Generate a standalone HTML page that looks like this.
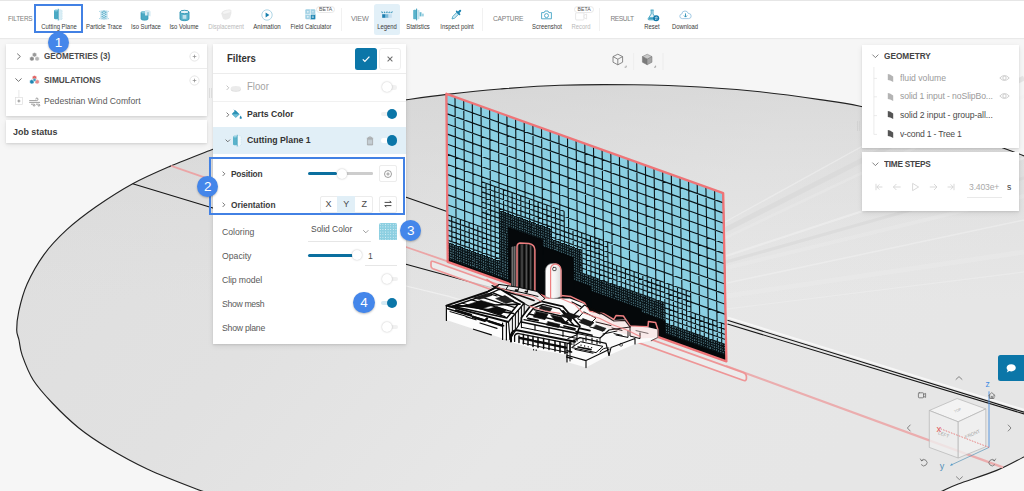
<!DOCTYPE html>
<html lang="en">
<head>
<meta charset="utf-8">
<title>Cutting Plane - Post-processing</title>
<style>
*{box-sizing:border-box;margin:0;padding:0}
html,body{width:1024px;height:491px;overflow:hidden;background:#f6f6f6;font-family:"Liberation Sans",sans-serif;color:#444}
#app{position:relative;width:1024px;height:491px;overflow:hidden}
#scene{position:absolute;left:0;top:0;width:1024px;height:491px}
.abs{position:absolute}
/* toolbar */
#tb{position:absolute;left:0;top:0;width:1024px;height:37.6px;background:#fff;border-top:1px solid #e6e6e6;box-shadow:0 1px 1px rgba(0,0,0,.05)}
.sec{position:absolute;top:13.5px;font-size:6.4px;letter-spacing:-.2px;color:#7d7d7d;line-height:8px;white-space:nowrap}
.lbl{position:absolute;top:21.9px;width:60px;margin-left:-30px;text-align:center;font-size:6.6px;line-height:8px;color:#3a3a3a;white-space:nowrap;transform:scaleX(.894)}
.lbl.dis{color:#b9b9b9}
.tsep{position:absolute;top:7px;width:1px;height:23px;background:#f1f1f1}
.ico{position:absolute;margin-top:-.7px}
.beta{position:absolute;height:7px;border:1px solid #e9e9e9;border-radius:4px;background:#fff;font-size:5.2px;line-height:5.6px;text-align:center;color:#555;letter-spacing:0}
/* panels */
.panel{position:absolute;background:#fff;box-shadow:0 1px 2px rgba(0,0,0,.1),0 2px 6px rgba(0,0,0,.08)}
.t{position:absolute;white-space:nowrap;line-height:12px;transform:scaleX(.93);transform-origin:0 50%}
.t.c{transform:none}
.b{font-weight:bold}
.badge{position:absolute;width:21.4px;height:21.4px;border-radius:50%;background:#4486ea;color:#fff;font-size:13.5px;line-height:21.4px;text-align:center;box-shadow:0 1px 2px rgba(0,0,0,.25)}
.knob{position:absolute;width:10px;height:10px;border-radius:50%;background:#fff;box-shadow:0 0 2px rgba(0,0,0,.28)}
.knob.on{background:#0b76a8;box-shadow:none;width:10.6px;height:10.6px}
.track{position:absolute;height:4.4px;border-radius:2.2px;background:#f1f1f1}
.track.on{background:#d5e9f3}
.sbtn{position:absolute;width:18.2px;height:17.6px;border:1px solid #ececec;border-radius:2px;background:#fff}
</style>
</head>
<body>
<div id="app">
<svg id="scene" width="1024" height="491" viewBox="0 0 1024 491">
<defs>
<linearGradient id="gd" x1="0" y1="0" x2="1" y2="0.35">
<stop offset="0" stop-color="#dedede"/><stop offset="0.4" stop-color="#e1e1e1"/><stop offset="0.7" stop-color="#e7e7e7"/><stop offset="1" stop-color="#e6e6e6"/>
</linearGradient>
<linearGradient id="gv" gradientUnits="userSpaceOnUse" x1="0" y1="84" x2="0" y2="300">
<stop offset="0" stop-color="#cfcfcf" stop-opacity=".55"/><stop offset="0.45" stop-color="#d4d4d4" stop-opacity=".3"/><stop offset="1" stop-color="#d8d8d8" stop-opacity="0"/>
</linearGradient>
</defs>
<rect width="1024" height="491" fill="#f6f6f6"/>
<path d="M212.9 149.2C220.8 146.2 245.5 136.4 260.0 131.5C274.5 126.5 285.0 123.3 300.0 119.5C315.0 115.7 332.7 111.7 350.0 108.5C367.3 105.3 387.8 102.5 404.0 100.2C420.2 97.9 431.0 96.3 447.0 94.4C463.0 92.5 481.2 90.5 500.0 89.0C518.8 87.5 537.7 85.9 560.0 85.2C582.3 84.5 610.7 84.5 634.0 84.8C657.3 85.1 679.0 85.8 700.0 87.0C721.0 88.2 740.0 89.7 760.0 91.8C780.0 93.9 803.5 97.2 820.0 99.6C836.5 102.0 844.0 102.8 859.0 106.0C874.0 109.2 893.2 114.0 910.0 118.5C926.8 123.0 943.3 127.7 960.0 133.0C976.7 138.3 997.7 146.0 1010.0 150.5C1022.3 155.0 1030.0 158.4 1034.0 160.0L1034 453C1032.3 453.1 1030.2 453.9 1024.0 456.9C1017.8 459.9 1007.7 465.9 996.7 470.4C985.7 474.9 967.2 480.6 958.2 484.0C949.2 487.4 946.3 489.3 942.4 491.0C938.5 492.7 936.2 493.8 935.0 494.4L212 494C209.5 493.2 207.7 493.3 197.0 489.2C186.3 485.1 162.6 476.1 147.7 469.2C132.8 462.3 119.2 454.6 107.7 447.7C96.2 440.8 87.7 435.1 78.5 427.7C69.3 420.2 59.8 410.9 52.3 403.0C44.8 395.1 38.2 387.9 33.2 380.0C28.2 372.1 24.6 362.1 22.2 355.4C19.8 348.7 19.9 344.2 19.0 340.0C18.1 335.8 16.7 334.7 16.7 329.9C16.7 325.1 17.1 318.8 18.8 311.1C20.5 303.5 22.9 293.4 27.1 284.0C31.3 274.6 37.2 263.9 43.8 254.8C50.4 245.8 58.1 237.7 66.8 229.7C75.5 221.7 85.0 214.5 96.0 206.8C107.0 199.2 120.2 190.6 132.7 183.8C145.2 177.0 157.7 171.7 171.1 165.9C184.5 160.1 205.9 152.0 212.9 149.2Z" fill="url(#gd)"/>
<path d="M212.9 149.2C220.8 146.2 245.5 136.4 260.0 131.5C274.5 126.5 285.0 123.3 300.0 119.5C315.0 115.7 332.7 111.7 350.0 108.5C367.3 105.3 387.8 102.5 404.0 100.2C420.2 97.9 431.0 96.3 447.0 94.4C463.0 92.5 481.2 90.5 500.0 89.0C518.8 87.5 537.7 85.9 560.0 85.2C582.3 84.5 610.7 84.5 634.0 84.8C657.3 85.1 679.0 85.8 700.0 87.0C721.0 88.2 740.0 89.7 760.0 91.8C780.0 93.9 803.5 97.2 820.0 99.6C836.5 102.0 844.0 102.8 859.0 106.0C874.0 109.2 893.2 114.0 910.0 118.5C926.8 123.0 943.3 127.7 960.0 133.0C976.7 138.3 997.7 146.0 1010.0 150.5C1022.3 155.0 1030.0 158.4 1034.0 160.0L1034 453C1032.3 453.1 1030.2 453.9 1024.0 456.9C1017.8 459.9 1007.7 465.9 996.7 470.4C985.7 474.9 967.2 480.6 958.2 484.0C949.2 487.4 946.3 489.3 942.4 491.0C938.5 492.7 936.2 493.8 935.0 494.4L212 494C209.5 493.2 207.7 493.3 197.0 489.2C186.3 485.1 162.6 476.1 147.7 469.2C132.8 462.3 119.2 454.6 107.7 447.7C96.2 440.8 87.7 435.1 78.5 427.7C69.3 420.2 59.8 410.9 52.3 403.0C44.8 395.1 38.2 387.9 33.2 380.0C28.2 372.1 24.6 362.1 22.2 355.4C19.8 348.7 19.9 344.2 19.0 340.0C18.1 335.8 16.7 334.7 16.7 329.9C16.7 325.1 17.1 318.8 18.8 311.1C20.5 303.5 22.9 293.4 27.1 284.0C31.3 274.6 37.2 263.9 43.8 254.8C50.4 245.8 58.1 237.7 66.8 229.7C75.5 221.7 85.0 214.5 96.0 206.8C107.0 199.2 120.2 190.6 132.7 183.8C145.2 177.0 157.7 171.7 171.1 165.9C184.5 160.1 205.9 152.0 212.9 149.2Z" fill="url(#gv)"/>
<path d="M212.9 149.2C220.8 146.2 245.5 136.4 260.0 131.5C274.5 126.5 285.0 123.3 300.0 119.5C315.0 115.7 332.7 111.7 350.0 108.5C367.3 105.3 387.8 102.5 404.0 100.2C420.2 97.9 431.0 96.3 447.0 94.4C463.0 92.5 481.2 90.5 500.0 89.0C518.8 87.5 537.7 85.9 560.0 85.2C582.3 84.5 610.7 84.5 634.0 84.8C657.3 85.1 679.0 85.8 700.0 87.0C721.0 88.2 740.0 89.7 760.0 91.8C780.0 93.9 803.5 97.2 820.0 99.6C836.5 102.0 844.0 102.8 859.0 106.0C874.0 109.2 893.2 114.0 910.0 118.5C926.8 123.0 943.3 127.7 960.0 133.0C976.7 138.3 997.7 146.0 1010.0 150.5C1022.3 155.0 1030.0 158.4 1034.0 160.0" fill="none" stroke="#222" stroke-width="1.15"/>
<path d="M212.9 149.2C205.9 152.0 184.5 160.1 171.1 165.9C157.7 171.7 145.2 177.0 132.7 183.8C120.2 190.6 107.0 199.2 96.0 206.8C85.0 214.5 75.5 221.7 66.8 229.7C58.1 237.7 50.4 245.8 43.8 254.8C37.2 263.9 31.3 274.6 27.1 284.0C22.9 293.4 20.5 303.5 18.8 311.1C17.1 318.8 16.7 325.1 16.7 329.9C16.7 334.7 18.1 335.8 19.0 340.0C19.9 344.2 19.8 348.7 22.2 355.4C24.6 362.1 28.2 372.1 33.2 380.0C38.2 387.9 44.8 395.1 52.3 403.0C59.8 410.9 69.3 420.2 78.5 427.7C87.7 435.1 96.2 440.8 107.7 447.7C119.2 454.6 132.8 462.3 147.7 469.2C162.6 476.1 186.3 485.1 197.0 489.2C207.7 493.3 209.5 493.2 212.0 494.0" fill="none" stroke="#222" stroke-width="1.15"/>
<path d="M1034.0 452.4C1032.3 453.1 1030.2 453.9 1024.0 456.9C1017.8 459.9 1007.7 465.9 996.7 470.4C985.7 474.9 967.2 480.6 958.2 484.0C949.2 487.4 946.3 489.3 942.4 491.0C938.5 492.7 936.2 493.8 935.0 494.4" fill="none" stroke="#222" stroke-width="1.15"/>
<g stroke="#f0f0f0" stroke-linecap="butt" fill="none"><path d="M725 222 L870 142" stroke-width="1.4" opacity=".55"/><path d="M725 238 L1024 96" stroke-width="3" opacity=".3"/><path d="M726 256 L1024 158" stroke-width="2.2" opacity=".6"/><path d="M726 268 L1024 196" stroke-width="4" opacity=".3"/><path d="M727 283 L1024 220" stroke-width="1.6" opacity=".55"/><path d="M727 296 L1024 252" stroke-width="5" opacity=".3"/><path d="M727 309 L1024 272" stroke-width="1.4" opacity=".5"/><path d="M728 317.6 L1024 409.8" stroke-width="2" stroke="#f6f6f6"/></g>
<g stroke="#d6d6d6" fill="none" opacity=".5"><path d="M725 230 L1024 78" stroke-width="5"/><path d="M726 262 L1024 178" stroke-width="3"/></g>
<g stroke="#161616" stroke-width="1.1" fill="none"><path d="M132.7 183.8 L208.7 206.8 L406 264.2 L500 290" stroke-width="1.1"/><path d="M300 160 L404 196.5 L447 211.5"/><path d="M727.5 320.3 L1024 412.2"/><path d="M727.5 324 L1024 413.9"/></g>
<path d="M406 286 L449 296.4 L520 318" stroke="#efefef" stroke-width="1.2" fill="none"/>
<g stroke="#ee9697" fill="none" stroke-width="1.3"><path d="M171.1 165.9 L260 196.6 L406 247 L449 261.8" stroke="#eba5a6" stroke-width="1.8"/><path d="M726 366 L1003 467.4" stroke="#ebadae" stroke-width="2.2"/><path d="M433.5 261.5 L743.5 372.6 Q746.4 373.8 746.4 376.6 L746.4 378.6 Q746.2 381.4 743 380.2 L433 268.8 Q431 268 431 266 L431 262.8 Q431.2 260.6 433.5 261.5Z" stroke-width="1.7" fill="#ededed" fill-opacity=".8"/></g>
<polygon points="447.7,261.8 726.4,361.4 723.2,193.2 446.4,93.8" fill="#8bd0e3"/>
<path d="M447.7 261.8L500 280.5L499.8 261.3L447.6 242.7ZM500 280.5L552.2 299.1L551.4 229.4L499.3 210.7ZM552.2 299.1L582.7 310L581.9 250.4L551.5 239.5ZM582.7 310L665.4 339.6L664.8 302.7L582.2 273.2ZM665.4 339.6L726.4 361.4L726.1 344.8L665.2 323Z" fill="#0b1519" fill-opacity=".6"/>
<path d="M449.9 262.6L449.7 243.5M454.2 264.1L454.1 245M458.6 265.7L458.4 246.6M462.9 267.2L462.8 248.1M467.3 268.8L467.1 249.7M471.7 270.4L471.5 251.2M476 271.9L475.8 252.8M480.4 273.5L480.2 254.3M484.7 275L484.5 255.9M489.1 276.6L488.9 257.5M493.4 278.1L493.2 259M497.8 279.7L497.6 260.6M502.1 281.3L501.4 211.5M506.5 282.8L505.8 213.1M510.8 284.4L510.1 214.6M515.2 285.9L514.5 216.2M519.6 287.5L518.8 217.7M523.9 289L523.2 219.3M528.3 290.6L527.5 220.8M532.6 292.1L531.8 222.4M537 293.7L536.2 223.9M541.3 295.3L540.5 225.5M545.7 296.8L544.9 227.1M550 298.4L549.2 228.6M554.4 299.9L553.7 240.3M558.7 301.5L558 241.8M563.1 303L562.4 243.4M567.5 304.6L566.7 245M571.8 306.2L571 246.5M576.2 307.7L575.4 248.1M580.5 309.3L579.7 249.6M584.9 310.8L584.4 274M589.2 312.4L588.7 275.5M593.6 313.9L593.1 277.1M597.9 315.5L597.4 278.6M602.3 317L601.8 280.2M606.6 318.6L606.1 281.7M611 320.2L610.5 283.3M615.4 321.7L614.8 284.9M619.7 323.3L619.2 286.4M624.1 324.8L623.5 288M628.4 326.4L627.9 289.5M632.8 327.9L632.2 291.1M637.1 329.5L636.6 292.6M641.5 331.1L640.9 294.2M645.8 332.6L645.3 295.7M650.2 334.2L649.6 297.3M654.5 335.7L654 298.9M658.9 337.3L658.3 300.4M663.3 338.8L662.6 302M667.6 340.4L667.3 323.8M672 341.9L671.7 325.3M676.3 343.5L676 326.9M680.7 345.1L680.4 328.4M685 346.6L684.7 330M689.4 348.2L689.1 331.6M693.7 349.7L693.4 333.1M698.1 351.3L697.8 334.7M702.4 352.8L702.1 336.2M706.8 354.4L706.5 337.8M711.2 356L710.9 339.3M715.5 357.5L715.2 340.9M719.9 359.1L719.6 342.4M724.2 360.6L723.9 344M447.7 257.9L726.3 357.4M447.6 252.8L726.2 352.4M447.6 247.7L726.1 347.3M447.6 242.7L665.1 320.5M499.7 256.3L665 315.4M499.7 251.2L664.9 310.3M499.6 246.2L664.9 305.3M499.6 241.1L582.2 270.7M499.5 236L582.1 265.6M499.5 231L582 260.5M499.4 225.9L582 255.5M499.4 220.9L581.9 250.4M499.3 215.8L551.4 234.5M499.3 210.7L551.4 229.4" fill="none" stroke="#0b1519" stroke-width="1" shape-rendering="crispEdges"/>
<path d="M447.7 261.8L446.4 93.8M452.1 263.4L451.7 216.4M456.4 264.9L455 96.9M460.8 266.5L460.4 219.5M465.1 268L463.7 100M469.5 269.6L469.1 222.6M473.8 271.1L472.3 103.1M478.2 272.7L477.8 225.7M482.5 274.2L481 106.2M486.9 275.8L486 183.3M491.2 277.4L489.6 109.3M495.6 278.9L494.7 186.4M500 280.5L498.3 112.4M504.3 282L503.4 189.5M508.7 283.6L506.9 115.5M513 285.1L512.1 192.6M517.4 286.7L515.6 118.6M521.7 288.3L520.7 195.7M526.1 289.8L524.2 121.8M530.4 291.4L529.4 198.8M534.8 292.9L532.9 124.9M539.1 294.5L538.1 201.9M543.5 296L541.5 128M547.9 297.6L546.8 205.1M552.2 299.1L550.2 131.1M556.6 300.7L555.4 208.2M560.9 302.3L558.9 134.2M565.3 303.8L564.1 211.3M569.6 305.4L567.5 137.3M574 306.9L573 229.6M578.3 308.5L576.1 140.4M582.7 310L581.7 232.7M587 311.6L584.8 143.5M591.4 313.2L590.4 235.8M595.8 314.7L593.5 146.6M600.1 316.3L599 238.9M604.5 317.8L602.1 149.7M608.8 319.4L607.7 242M613.2 320.9L610.8 152.8M617.5 322.5L616.7 265.4M621.9 324.1L619.4 155.9M626.2 325.6L625.4 268.5M630.6 327.2L628 159M635 328.7L634.1 271.6M639.3 330.3L636.7 162.1M643.7 331.8L642.8 274.7M648 333.4L645.4 165.2M652.4 334.9L651.5 277.8M656.7 336.5L654 168.3M661.1 338.1L660.1 280.9M665.4 339.6L662.7 171.5M669.8 341.2L668.8 284M674.1 342.7L671.3 174.6M678.5 344.3L677.5 287.1M682.9 345.8L680 177.7M687.2 347.4L686.2 290.3M691.6 348.9L688.6 180.8M695.9 350.5L695.3 313.6M700.3 352.1L697.2 183.9M704.6 353.6L704 316.7M709 355.2L705.9 187M713.3 356.7L712.7 319.9M717.7 358.3L714.6 190.1M722 359.8L721.4 323M726.4 361.4L723.2 193.2M447.6 255.3L726.3 354.9M447.6 250.3L726.2 349.8M447.6 245.2L726.1 344.8M447.5 240.1L726 339.7M447.5 235.1L725.9 334.7M447.5 230L725.8 329.6M447.4 225L725.7 324.5M447.4 219.9L690.8 307M447.3 214.8L725.5 314.4M482.1 222.2L690.6 296.9M447.3 204.7L725.3 304.3M482 212.1L607.9 257.2M447.2 194.6L725.1 294.1M481.9 202L607.8 247.1M447.1 184.5L724.9 284M481.8 191.9L564.2 221.4M447 174.4L724.7 273.9M481.7 181.7L564.1 211.3M446.9 164.2L724.5 263.7M446.9 154.1L724.3 253.6M446.8 144L724.2 243.5M446.7 133.9L724 233.3M446.6 123.8L723.8 223.2M446.6 113.6L723.6 213.1M446.5 103.5L723.4 202.9" fill="none" stroke="#0b1519" stroke-width="1.12"/>
<path d="M447.7 261.8L508.7 283.6L508.6 280.6L447.7 258.8ZM508.7 283.6L543.5 296L542.8 239.7L508.1 227.3ZM543.5 296L574 306.9L573.3 257.4L542.9 246.5ZM574 306.9L591.4 313.2L591 286.3L573.6 280.1ZM591.4 313.2L641.5 331.1L641.1 308.8L591.1 290.9ZM641.5 331.1L665.4 339.6L665.1 320.9L641.2 312.3ZM665.4 339.6L726.4 361.4L726.3 355.5L665.3 333.7Z" fill="#05080a" stroke="#05080a" stroke-width="0.5"/>
<polygon points="447.7,261.8 726.4,361.4 723.2,193.2 446.4,93.8" fill="none" stroke="#ef7477" stroke-width="2.3" stroke-linejoin="round"/>
<g id="bld" stroke-linejoin="round" stroke-linecap="round">
<!-- red cut silhouette behind the buildings -->
<path d="M487 279.6L500 288.4L516 291.6L533 293.6L543 299L546 297.5L561 295.4L571 296.6L584.5 303L589.3 311.3L604 313.8L613.8 319.5L616 315.6L623.4 316L625.2 318.6L630 326L640 326.4L648 326.8L648.4 321.6L655.6 322.6L657.8 329.2L657.8 337.4L651.3 340.6" fill="none" stroke="#ee7f80" stroke-width="1.5"/>
<!-- tower -->
<g>
<polygon points="511,247 516.4,246 516.4,289.6 511,288.4" fill="#3d3d3d"/>
<path d="M512.6 247V288.6M514.6 246.6V289" stroke="#9a9a9a" stroke-width=".6" fill="none"/>
<path d="M517 290V247Q517 243.6 520 243.2L529 243.6Q534.8 245 534.8 250V291.6Z" fill="#262626"/>
<path d="M522 245V290.4M526.4 245V290.8M530.6 246V291" stroke="#6f6f6f" stroke-width=".7" fill="none"/>
<path d="M519.6 245V290M524.2 244.6V290.6M528.6 245V291M532.8 247V291.2" stroke="#050505" stroke-width="1.3" fill="none"/>
<path d="M517 291V247Q517 243.4 520 243L529 243.4Q534.9 244.8 534.9 250V292" stroke="#ee7f80" stroke-width="1.5" fill="none"/>
</g>
<!-- cylinder -->
<g>
<defs><linearGradient id="gcyl" x1="0" y1="0" x2="1" y2="0"><stop offset="0" stop-color="#ffffff"/><stop offset=".6" stop-color="#f4f4f4"/><stop offset="1" stop-color="#d9d9d9"/></linearGradient></defs>
<path d="M545.4 271V296.6Q553.3 300.4 561.3 296.6V271Q561 263.4 553.3 263.4Q545.7 263.4 545.4 271Z" fill="url(#gcyl)" stroke="#8a8a8a" stroke-width=".7"/>
<path d="M550.6 298V268.4Q551.4 264.2 555.6 263.8Q560.6 264.6 561 270V297" fill="none" stroke="#ee7f80" stroke-width="1.2"/>
<rect x="552.8" y="267.4" width="3.2" height="3.2" rx=".6" fill="#fff" stroke="#3a3a3a" stroke-width=".9"/>
</g>
<!-- low block behind (under tower) -->
<g stroke="#0d0d0d" fill="none">
<polygon points="487,292 499,284.4 519,287.4 537,291.4 545,298.6 541.4,301.4 530,306.6 524.2,303.5 497,287" fill="#ececec" stroke-width="1"/>
<path d="M499 284.4L497 287M501 288.6L522 292.6L538 296.4M508 286L506 289.4M519 287.4L517.6 291.6M528 289.6L526.6 293.6" stroke-width="1"/>
<path d="M504 291.4L520 295.4L534 300.4" stroke-width="1.6"/>
<path d="M515.6 290.2h1.6M525.4 291.6h1.8" stroke-width="1.8"/>
<path d="M489 293.4L497 289.4L508 295" stroke-width="1.2"/>
</g>
<!-- white masses -->
<polygon points="446.4,305.4 489.2,291.3 497,287 523.4,304 523.4,316 510,339.4 502.8,338.6 446.4,320" fill="#fdfdfd"/>
<polygon points="510,334 521.4,317.8 530,306 541.4,301 546,299 561,298.5 569.8,298.4 584.5,304 589.3,311.8 604,314.4 613.8,320 625.2,319.4 630,326.4 648,327.2 657.8,329.6 657.8,337.4 651.3,340.6 635,344 609,355.3 586,367.6 567,361.9 567,355.2 557,353 534.6,349.6 525.6,346.2 510,341.7" fill="#fbfbfb"/>
<!-- block 1 line work -->
<g fill="none" stroke="#0a0a0a">
<path d="M446.4 305.7L487 292L497 287L524.2 303.5L508.5 322Z" stroke-width="1.9" fill="#fff"/>
<path d="M452.5 306.2L492.5 292.6L518.4 303.8L506.8 318Z" stroke-width="1.5"/>
<path d="M449 306.4L520 304.2" stroke-width="1.7"/>
<path d="M456 305L513.6 313.4" stroke-width="1.5"/>
<path d="M462 303L505 316.6M471 299.6L511 311.4M480 296.6L515 307.6M489 293.6L497 296" stroke-width="1.2"/>
<path d="M466 305.2L481 300.4L495 304.6L481 309Z" fill="#0d0d0d" stroke-width=".6"/>
<path d="M485 310L497 306.6L506 310L500.6 315Z" fill="#0d0d0d" stroke-width=".6"/>
<path d="M496 298.4L505 295.6L514 301L506 303.4Z" fill="#222" stroke-width=".6"/>
<path d="M474 297.4L487 293.4L492 295.4L479 299.6Z" fill="#1a1a1a" stroke-width=".5"/>
<path d="M487 292L497 287M489 294L499 289.4M492 285.6L500 289.6" stroke-width="1.2"/>
<path d="M446.4 305.7V320.4" stroke-width="1.2"/>
<path d="M447.6 308.8L503.6 325.8" stroke-width="1.5"/>
<path d="M450 311.6L466 316.2" stroke-width="1"/>
<path d="M456 310.4L471 315M473 317L485 320.8L487 318.4M489 321.4L502 325.6" stroke-width="2.4"/>
<path d="M466 316.6L476 319.8M480 323L497 328.4" stroke-width="1.2"/>
<path d="M502.6 323V339.4M506.4 322.6V340M510 321V339.2" stroke-width="1.2"/>
<path d="M508.5 322L510 339.4L524.2 316V303.5Z" fill="#f1f1f1" stroke-width="1.1"/>
<path d="M512.4 318V335M515.4 314V330.4M518.4 310.6V326M521.4 307V321" stroke-width="1"/>
<path d="M473.5 329.2L491.4 334.9" stroke-width="1.2"/>
</g>
<!-- block 2 line work -->
<g fill="none" stroke="#0a0a0a">
<path d="M521.4 317.8L530 306.6L541.4 301.4L562.8 306.4L580 326L577 333.5L521.4 322Z" stroke-width="1.7" fill="#fff"/>
<path d="M526.6 316.8L533.6 308L543 304.4L559.6 308.6L573.6 325" stroke-width="1.4"/>
<path d="M524 319.6L575 330M529 314L568 322.6M534 309.6L561 316" stroke-width="1.3"/>
<path d="M536 311.4L548 314L545 319.6L533.6 317Z" fill="#0d0d0d" stroke-width=".7"/>
<path d="M551 315L562 317.6L566.6 323.6L555 321Z" fill="#0d0d0d" stroke-width=".7"/>
<path d="M541 305.6L552 308.2L550 311.6L539.4 309Z" fill="#1c1c1c" stroke-width=".6"/>
<path d="M548 321.6L560 324.4L558.6 327.6L546.6 325Z" fill="#111" stroke-width=".6"/>
<path d="M528 318.4L538 320.6M563 311L571 320" stroke-width="2"/>
<path d="M521.4 322V327.6M577 333.5V341M549 327.8V333.4M535 325V330M563 331V336.4" stroke-width="1.1"/>
<path d="M522 327.4L577 338.4" stroke-width="1"/>
<!-- arcade front -->
<path d="M511 341.4V334.6Q513 329.4 518.4 330.4L575 341.8" stroke-width="2"/>
<path d="M514.6 341.4V335.6Q516 333 519 333.6L572 344.2" stroke-width="1.3"/>
<path d="M519 336V342.6M523.4 334.6V343.8M528 335.4V345M533 336.6V346.4M538 337.6V347.4M543.6 338.6V348.4M549 339.6V349.6M555 341V351M560 342V352.2M565 343V353.4M570 344V352" stroke-width="1.5"/>
<path d="M520 338L533 340.6M535 341.2L548 343.8M550 344.4L566 347.6" stroke-width="2.4"/>
<path d="M523 343.2L568 352.6" stroke-width="1"/>
<path d="M533.6 349.3v.8M536.2 349.8v.8" stroke-width="1"/>
</g>
<!-- block 3 (right) line work -->
<g fill="none" stroke="#0a0a0a">
<path d="M566 322L584.5 305L604 315L613.8 321L625 320.4L630 327" stroke-width="1.1"/>
<path d="M577 333.5L600 338L609 330L630 327" stroke-width="1.1"/>
<path d="M567 361.9V344L580 337.6L606 343.4L609 355.3" stroke-width="1.2"/>
<path d="M567 355.2L586 360.6L586 367.6M586 360.6L609 349.6" stroke-width="1.1"/>
<path d="M572 347.6L596 352.6L603 346.4L581 341.8Z" stroke-width="1" fill="#fff"/>
<path d="M578 347L591 349.6" stroke-width="1.6"/>
<path d="M570 340.6V361M574 339V346M583 338.4V342M600 338V343.6" stroke-width=".9"/>
<path d="M584 312L596 318L590 324L578 319Z" stroke-width="1" />
<path d="M590 327L604 330.4M596 322L611 325.6M603 334L617 331" stroke-width="1"/>
<path d="M609 355.3L611 347.6L635 338.6L635 344" stroke-width="1.1"/>
<path d="M616 335L628 337.4L628 331" stroke-width="1"/>
<path d="M621 343.4a1.4 1.4 0 1 0 .1 0" stroke-width=".8"/>
<path d="M630 326.4V336L640 338.6V333" stroke-width="1"/>
<path d="M636 330.6L648 333.4M651.3 340.6L657.8 337.4V329.6" stroke-width=".9" stroke="#555"/>
</g>
<!-- extra clutter block 3 -->
<g fill="none" stroke="#0a0a0a" stroke-linecap="round">
<path d="M560 316L571 319L580 316.4L568 312.6Z" fill="#151515" stroke-width=".6"/>
<path d="M562 322.6L578 326.6M564 326L575 328.8" stroke-width="1.8"/>
<path d="M576 331.6L592 335.2M580 328.4L590 330.6" stroke-width="1.6"/>
<path d="M583 318.6L594 322.6L590 326.4L579.4 322.4Z" fill="#1a1a1a" stroke-width=".6"/>
<path d="M596 325L606 328.4L603 331.4L593.4 328Z" fill="#222" stroke-width=".6"/>
<path d="M568 338.6L577 334.8M586 336.6L586 341M592 338V343M597 339.6V344" stroke-width="1.1"/>
<path d="M575 349.4L593 353.2" stroke-width="1"/>
<path d="M581 345.2h.1M584.6 346h.1M588.2 346.8h.1M591.6 347.6h.1" stroke-width="1.3"/>
<path d="M566.6 357L572 358.6M567 350.6L571.6 352" stroke-width="1.4"/>
<path d="M600 352Q603 347 609 348" stroke-width="1"/>
<path d="M590 309L600 314M572 302L581 306.6" stroke-width="1.2"/>
<path d="M612 328L622 330.4M614 333.6L622 335.4" stroke-width="1"/>
</g>
<polygon points="584.5,304 589.3,311.8 604,314.4 613.8,320 625.2,319.4 630,326.4 648,327.2 657.8,329.6 657.8,337.4 640,338.6 612,330 596,322" fill="#ee8f90" fill-opacity=".16"/>
<!-- red overlay lines crossing buildings (cut outline) -->
<g fill="none" stroke="#ee7f80" stroke-width="1.1" opacity=".85">
<path d="M497 287L516 293.6L533 296.4L541 301.4"/>
<path d="M561 298.6L575 304.6L582 312.4L600 318.6L612 324.4L628 330.6L640 336.6"/>
<path d="M530 306.4L545 311L560 313.4"/>
</g>
</g>

<g id="navcube" font-family="Liberation Sans, sans-serif">
<g stroke="#b4b4b4" stroke-width=".7" stroke-linejoin="round">
<polygon points="929.3,410.5 957.1,398.5 985.8,408.9 958.2,421.8" fill="#f4f4f4" fill-opacity=".85"/>
<polygon points="929.3,410.5 958.2,421.8 958.2,458 929.3,447.4" fill="#efefef" fill-opacity=".8"/>
<polygon points="958.2,421.8 985.8,408.9 985.8,446.7 958.2,458" fill="#f1f1f1" fill-opacity=".8"/>
</g>
<text x="957.6" y="411.6" font-size="3.6" fill="#a6a6a6" text-anchor="middle" transform="rotate(-24 957.6 410.4)">TOP</text>
<text x="943.6" y="436" font-size="4.6" fill="#a0a0a0" text-anchor="middle" transform="rotate(21 943.6 434.4) skewX(0)">LEFT</text>
<text x="972.4" y="435.6" font-size="4.6" fill="#a0a0a0" text-anchor="middle" transform="rotate(-24 972.4 434)">FRONT</text>
<path d="M989 391.3V447.4" stroke="#4a8fe0" stroke-width=".9"/>
<path d="M989 447.4L950.3 465.4" stroke="#6a9dbd" stroke-width=".8"/>
<path d="M950.3 465.4l2.6-.2l-1-2z" fill="#4f9ccf"/>
<path d="M989 447.4L940.1 428.6" stroke="#e56b6b" stroke-width=".8" stroke-dasharray="1.6 1.2"/>
<text x="985.4" y="386.6" font-size="8.6" fill="#3f8be3">z</text>
<text x="939.8" y="468.6" font-size="9" fill="#4f8fb8">y</text>
<text x="936.4" y="431.6" font-size="9.4" fill="#e05555">x</text>
<g fill="none" stroke="#6a6a6a" stroke-width=".8" stroke-linecap="round" stroke-linejoin="round">
<path d="M956 379.4L959 376.6L962 379.4"/>
<path d="M956.4 476.8L959.4 479.6L962.4 476.8"/>
<path d="M910.2 425L907.4 428L910.2 431"/>
<path d="M1008.2 425L1011 428L1008.2 431"/>
<rect x="918.4" y="392.8" width="5.2" height="5" rx=".8"/><path d="M923.6 394.4L925.6 393.4V397.4L923.6 396.4"/>
<path d="M988.6 395.6L991.8 392.6L995 395.6M989.6 395V398.4H994V395M991.2 398.4V396.4H992.4V398.4"/>
<path d="M921.4 460.6A3.2 3.2 0 1 1 921.4 464.8M921.4 460.6L920.4 459M921.4 460.6L923 460.2"/>
<path d="M994.6 460.6A3.2 3.2 0 1 0 994.6 464.8M994.6 460.6L995.6 459M994.6 460.6L993 460.2"/>
</g>
</g>

</svg>
<!-- ============ TOOLBAR ============ -->
<div id="tb">
  <span class="sec" style="left:8px">FILTERS</span>
  <div class="abs" style="left:34px;top:3.1px;width:49px;height:29.2px;border:2px solid #4281e4"></div>

  <svg class="ico" style="left:53px;top:7.5px" width="11" height="13" viewBox="0 0 11 13"><path d="M1 2.6C1 1.4 5.2 1.4 5.2 2.6V10.2C5.2 11.5 1 11.5 1 10.2Z" fill="#4aa9c4"/><ellipse cx="3.1" cy="2.6" rx="2.1" ry=".9" fill="#7fc6da"/><path d="M5.2 1.2L9.2 2.2V11.4L5.2 12.2Z" fill="#d9edf5" stroke="#b7dcea" stroke-width=".5" stroke-dasharray="1 .7"/><path d="M5.2 .8V12.4" stroke="#2b93b3" stroke-width=".8"/></svg>
  <span class="lbl" style="left:58.8px">Cutting Plane</span>

  <svg class="ico" style="left:98px;top:8.5px" width="12" height="12" viewBox="0 0 12 12"><rect x="2.2" y="1.2" width="7.6" height="9.6" rx="1" fill="#cfe8f2"/><path d="M4.2 2.5V9.5M6 1.5V10.5M7.8 2.5V9.5" stroke="#47a6c3" stroke-width="1.1" stroke-dasharray="1.4 .8"/><path d="M1 2l1.2 1M11 2l-1.2 1M1 10l1.2-1M11 10l-1.2-1" stroke="#8fcde0" stroke-width=".7"/></svg>
  <span class="lbl" style="left:103.9px">Particle Trace</span>

  <svg class="ico" style="left:140px;top:8.5px" width="12" height="13" viewBox="0 0 12 13"><path d="M1 3.2C1 1.8 8 1.8 8 3.2V10C8 11.6 1 11.6 1 10Z" fill="#4aa9c4"/><ellipse cx="4.5" cy="3.2" rx="3.5" ry="1.2" fill="#86c9dc"/><path d="M5 1.2Q9.5 .6 10.6 2.4V7.5Q9 6 5 6.6Z" fill="#d7ecf4"/><path d="M1 3.2V10C1 11.6 8 11.6 8 10V3.2" fill="none" stroke="#2f96b5" stroke-width=".7"/></svg>
  <span class="lbl" style="left:145.6px">Iso Surface</span>

  <svg class="ico" style="left:178.5px;top:8.5px" width="12" height="13" viewBox="0 0 12 13"><path d="M1 3C1 .9 10 .9 10 3V10C10 12.2 1 12.2 1 10Z" fill="#5ab3cb"/><ellipse cx="5.5" cy="3" rx="4.5" ry="1.7" fill="#e6f4f9" stroke="#2f96b5" stroke-width=".9"/><path d="M1 3V10C1 12.2 10 12.2 10 10V3" fill="none" stroke="#2f96b5" stroke-width=".9"/><rect x="3.6" y="6" width="3.8" height="3.8" fill="#bfe1ec"/></svg>
  <span class="lbl" style="left:183.9px">Iso Volume</span>

  <svg class="ico" style="left:219.5px;top:9px" width="13" height="12" viewBox="0 0 13 12"><path d="M1.2 4.5L3 9.8Q6 12 10 9L11.6 3.4Q9 .6 4.4 1.6Q1.6 2.6 1.2 4.5Z" fill="#e9e9e9"/><ellipse cx="6.8" cy="3" rx="4.6" ry="1.8" transform="rotate(-14 6.8 3)" fill="#f4f4f4" stroke="#e2e2e2" stroke-width=".5"/></svg>
  <span class="lbl dis" style="left:225.9px">Displacement</span>

  <svg class="ico" style="left:260.8px;top:8.2px" width="12" height="12" viewBox="0 0 12 12"><circle cx="6" cy="6" r="5.2" fill="#fff" stroke="#9ccbe0" stroke-width=".8"/><path d="M4.6 3.6L8.4 6L4.6 8.4Z" fill="#167fae"/></svg>
  <span class="lbl" style="left:266.8px;font-size:6.93px">Animation</span>

  <svg class="ico" style="left:305.4px;top:8.2px" width="11" height="11" viewBox="0 0 11 11"><rect x=".3" y=".3" width="10" height="10" rx="1" fill="#9fd0e4"/><rect x="5.3" y="5.3" width="5" height="5" fill="#1f86b3"/><path d="M5.3 .3V10.3M.3 5.3H10.3" stroke="#fff" stroke-width=".7"/><path d="M1.8 2.8H3.8M2.8 1.8V3.8M6.8 2.8H8.8M1.8 7.8H3.8M2.8 6.8V8.8M6.8 7.2H8.8M6.8 8.4H8.8" stroke="#fff" stroke-width=".6"/></svg>
  <span class="lbl" style="left:310.6px">Field Calculator</span>
  <span class="beta" style="left:316px;top:4.9px;width:19.4px">BETA</span>

  <div class="tsep" style="left:340.5px"></div>
  <span class="sec" style="left:350.9px;font-size:7.2px">VIEW</span>
  <div class="abs" style="left:373.6px;top:2.6px;width:26.6px;height:31.8px;background:#e2f0f8;border-radius:2.5px"></div>
  <svg class="ico" style="left:380.6px;top:9.2px" width="12" height="9" viewBox="0 0 12 9"><path d="M.8 2.6H11.2" stroke="#2d8fb5" stroke-width=".9" stroke-dasharray="1.3 .9"/><path d="M.8 1V2.6M3.4 1.4V2.6M6 1V2.6M8.6 1.4V2.6M11.2 1V2.6" stroke="#2d8fb5" stroke-width=".6"/><rect x="1.2" y="4.2" width="3.4" height="3.6" fill="#1e7fb0"/><rect x="4.6" y="4.2" width="3" height="3.6" fill="#78b9d8"/><rect x="7.6" y="4.2" width="3.2" height="3.6" fill="#c7dff0"/></svg>
  <span class="lbl" style="left:386.6px">Legend</span>

  <svg class="ico" style="left:412px;top:7.6px" width="13" height="13" viewBox="0 0 13 13"><path d="M1.2 2.6C1.2 1.4 4.4 1.4 4.4 2.6V10.4C4.4 11.6 1.2 11.6 1.2 10.4Z" fill="#5ab3cb"/><path d="M4.6 .6V12.4" stroke="#2b93b3" stroke-width=".9"/><path d="M5.2 1.6L7.4 2.2V11L5.2 11.6Z" fill="#bfe1ec"/><rect x="7.6" y="4.2" width="1.9" height="4.2" fill="#6bbad1"/><rect x="9.9" y="5.6" width="1.9" height="2.8" fill="#9fd3e3"/></svg>
  <span class="lbl" style="left:418.2px">Statistics</span>

  <svg class="ico" style="left:451px;top:8.2px" width="11" height="11" viewBox="0 0 11 11"><path d="M1 10L1.8 7.4L6.2 3L8 4.8L3.6 9.2Z" fill="#cfe8f2" stroke="#3da0c0" stroke-width=".8" stroke-linejoin="round"/><path d="M5.6 2.4L8.6 5.4" stroke="#1f86b3" stroke-width="1.5" stroke-linecap="round"/><path d="M7.2 3.8L9.2 1.8" stroke="#1f86b3" stroke-width="2" stroke-linecap="round"/></svg>
  <span class="lbl" style="left:456.8px">Inspect point</span>

  <div class="tsep" style="left:482px"></div>
  <span class="sec" style="left:492.9px;font-size:6.65px">CAPTURE</span>
  <svg class="ico" style="left:541.4px;top:9.6px" width="11" height="10" viewBox="0 0 11 10"><path d="M.6 2.6H3.2L4 1H7L7.8 2.6H10.4V8.8H.6Z" fill="none" stroke="#45a5c6" stroke-width=".9" stroke-linejoin="round"/><circle cx="5.5" cy="5.6" r="2" fill="none" stroke="#45a5c6" stroke-width=".9"/></svg>
  <span class="lbl" style="left:546.7px">Screenshot</span>

  <svg class="ico" style="left:575px;top:11.4px" width="13" height="9" viewBox="0 0 13 9"><rect x=".6" y=".8" width="8.4" height="7.2" rx="1" fill="#fff" stroke="#e1e1e1" stroke-width=".8"/><path d="M9 3.4L11.6 2V7L9 5.6Z" fill="#fff" stroke="#e1e1e1" stroke-width=".8" stroke-linejoin="round"/></svg>
  <span class="lbl dis" style="left:581px">Record</span>
  <span class="beta" style="left:574.2px;top:4.6px;width:20px">BETA</span>

  <div class="tsep" style="left:599px"></div>
  <span class="sec" style="left:610.5px;font-size:6.65px;letter-spacing:-.45px">RESULT</span>
  <svg class="ico" style="left:647.4px;top:8.6px" width="13" height="13" viewBox="0 0 13 13"><path d="M3.6 1H6.6M4.2 1V5L1.2 9.6Q.8 10.8 2 10.8H8.2Q9.4 10.8 9 9.6L6 5V1" fill="#e3f2f8" stroke="#3da0c0" stroke-width=".9" stroke-linejoin="round"/><path d="M2.2 8.2H8L8.8 10.2H1.4Z" fill="#3da0c0"/><circle cx="9.2" cy="9.2" r="3" fill="#0f78aa"/><path d="M7.8 8.4H10.4M10.4 8.4L9.6 7.7M10.6 10H8M8 10L8.8 10.7" stroke="#fff" stroke-width=".6" fill="none"/></svg>
  <span class="lbl" style="left:652.3px">Reset</span>

  <svg class="ico" style="left:678.6px;top:9.4px" width="13" height="10" viewBox="0 0 13 10"><path d="M3.4 8.6Q.8 8.6 .8 6.2Q.8 4.2 2.8 4Q3 1 6 1Q8.6 1 9.2 3.4Q12.2 3.4 12.2 6Q12.2 8.6 9.6 8.6Z" fill="#fff" stroke="#8fbfe0" stroke-width=".8"/><path d="M6.5 3.4V7M5 5.6L6.5 7.1L8 5.6" fill="none" stroke="#2d8fb5" stroke-width=".9"/></svg>
  <span class="lbl" style="left:685.2px">Download</span>
</div>

<!-- viewer mode icons -->
<svg class="abs" style="left:608px;top:50px" width="60" height="22" viewBox="0 0 60 22">
  <g fill="none" stroke="#6d6d6d" stroke-width=".8" stroke-linejoin="round"><path d="M9.8 4.2L14.6 6.6V12.2L9.8 14.8L5 12.2V6.6Z"/><path d="M5 6.6L9.8 9.2L14.6 6.6M9.8 9.2V14.8"/></g>
  <g stroke="#777" stroke-width=".5" stroke-linejoin="round"><path d="M39.2 4.2L44 6.6L39.2 9.2L34.4 6.6Z" fill="#c9c9c9"/><path d="M34.4 6.6L39.2 9.2V14.8L34.4 12.2Z" fill="#7b7b7b"/><path d="M44 6.6L39.2 9.2V14.8L44 12.2Z" fill="#a5a5a5"/></g>
  <path d="M16.6 17.2H18.2V15.6M46 17.2H47.6V15.6" fill="none" stroke="#8a8a8a" stroke-width=".7"/>
  <path d="M25.6 3V20M55 3V20" stroke="#ebebeb" stroke-width=".8"/>
</svg>

<!-- ============ LEFT TREE PANEL ============ -->
<div class="panel" style="left:6px;top:44.4px;width:201px;height:71.4px">
  <svg class="abs" style="left:9px;top:7.6px" width="8" height="9" viewBox="0 0 8 9"><path d="M2.2 1.6L5.4 4.5L2.2 7.4" fill="none" stroke="#666" stroke-width=".9"/></svg>
  <svg class="abs" style="left:23px;top:7.4px" width="11" height="10" viewBox="0 0 11 10"><g stroke="#fff" stroke-width=".4"><path d="M5.5 .6L7.6 1.6V4L5.5 5L3.4 4V1.6Z" fill="#9a9a9a"/><path d="M2.9 4.6L5 5.6V8L2.9 9L.8 8V5.6Z" fill="#8a8a8a"/><path d="M8.1 4.6L10.2 5.6V8L8.1 9L6 8V5.6Z" fill="#b5b5b5"/></g></svg>
  <span class="t b" style="left:37.5px;top:5.9px;font-size:8.71px;color:#4b4b4b">GEOMETRIES (3)</span>
  <svg class="abs" style="left:182.6px;top:6.6px" width="11" height="11" viewBox="0 0 11 11"><circle cx="5.5" cy="5.5" r="4.6" fill="#fff" stroke="#dcdcdc" stroke-width=".7"/><path d="M3.7 5.5H7.3M5.5 3.7V7.3" stroke="#8a8a8a" stroke-width=".7"/></svg>
  <div class="abs" style="left:0;top:24.1px;width:201px;height:1px;background:#ececec"></div>

  <svg class="abs" style="left:8.4px;top:32px" width="9" height="8" viewBox="0 0 9 8"><path d="M1.4 2.4L4.5 5.4L7.6 2.4" fill="none" stroke="#666" stroke-width=".9"/></svg>
  <svg class="abs" style="left:23px;top:31px" width="11" height="10" viewBox="0 0 11 10"><g stroke="#fff" stroke-width=".4"><path d="M5.5 .6L7.6 1.6V4L5.5 5L3.4 4V1.6Z" fill="#e05c5c"/><path d="M2.9 4.6L5 5.6V8L2.9 9L.8 8V5.6Z" fill="#1f86b3"/><path d="M8.1 4.6L10.2 5.6V8L8.1 9L6 8V5.6Z" fill="#e58a8a"/><path d="M5.5 3.2L7 4V5.8L5.5 6.6L4 5.8V4Z" fill="#3da0c0"/></g></svg>
  <span class="t b" style="left:37.5px;top:29.9px;font-size:8.98px;color:#4b4b4b">SIMULATIONS</span>
  <svg class="abs" style="left:182.6px;top:30.6px" width="11" height="11" viewBox="0 0 11 11"><circle cx="5.5" cy="5.5" r="4.6" fill="#fff" stroke="#dcdcdc" stroke-width=".7"/><path d="M3.7 5.5H7.3M5.5 3.7V7.3" stroke="#8a8a8a" stroke-width=".7"/></svg>

  <svg class="abs" style="left:7.6px;top:46px" width="10" height="16" viewBox="0 0 10 16"><path d="M4.9 0V7.5" stroke="#dedede" stroke-width=".7"/><rect x="1.4" y="7.6" width="7" height="6.8" fill="#fff" stroke="#dedede" stroke-width=".7"/><path d="M3.4 11H6.4M4.9 9.5V12.5" stroke="#777" stroke-width=".7"/></svg>
  <svg class="abs" style="left:23px;top:52.6px" width="12" height="10" viewBox="0 0 12 10"><g fill="none" stroke="#777" stroke-width=".7" stroke-linecap="round"><path d="M.6 3.6H7.6Q9 3.6 9 2.2Q9 1 7.8 1Q6.8 1 6.8 2"/><path d="M.6 5.4H10.6"/><path d="M2.4 7.2H5Q6 7.2 6 8.2Q6 9.2 5 9.2Q4.2 9.2 4.2 8.4"/><path d="M7.4 7.2H9.6Q10.8 7.2 10.8 8.2Q10.8 9.2 9.8 9.2Q9 9.2 9 8.4"/></g></svg>
  <span class="t" style="left:37.6px;top:51px;font-size:9.3px;color:#5a5a5a">Pedestrian Wind Comfort</span>
</div>
<div class="panel" style="left:6px;top:120px;width:201px;height:22.8px">
  <span class="t b" style="left:7px;top:5.8px;font-size:9.57px;color:#3c3c3c">Job status</span>
</div>

<!-- ============ FILTERS PANEL ============ -->
<div class="panel" style="left:213.4px;top:44px;width:192.2px;height:299.5px">
  <span class="t b" style="left:13.2px;top:8.6px;font-size:10.32px;color:#333">Filters</span>
  <div class="abs" style="left:141.8px;top:4.3px;width:21.6px;height:21.6px;border-radius:2.5px;background:#0b76a8"></div>
  <svg class="abs" style="left:146.4px;top:9px" width="12" height="12" viewBox="0 0 12 12"><path d="M2.8 6.4L4.9 8.4L9.4 3.6" fill="none" stroke="#fff" stroke-width="1.3"/></svg>
  <div class="abs" style="left:165.9px;top:4.3px;width:21.6px;height:21.4px;border-radius:3px;background:#fff;border:1px solid #efefef"></div>
  <svg class="abs" style="left:171.4px;top:10px" width="10" height="10" viewBox="0 0 10 10"><path d="M2.6 2.6L7.4 7.4M7.4 2.6L2.6 7.4" stroke="#707070" stroke-width="1.05"/></svg>
  <div class="abs" style="left:0;top:29px;width:192.6px;height:1px;background:#ececec"></div>

  <!-- Floor -->
  <svg class="abs" style="left:12px;top:40px" width="6" height="8" viewBox="0 0 6 8"><path d="M1.6 1.6L3.8 3.8L1.6 6" fill="none" stroke="#aaa" stroke-width=".7"/></svg>
  <svg class="abs" style="left:17px;top:41.4px" width="12" height="8" viewBox="0 0 12 8"><path d="M.8 3.4V4.6Q.8 6.8 5.8 6.8Q10.8 6.8 10.8 4.6V3.4Z" fill="#dcdcdc"/><ellipse cx="5.8" cy="3.4" rx="5" ry="2.3" fill="#ebebeb"/></svg>
  <span class="t" style="left:33.6px;top:37.4px;font-size:10.32px;color:#a3a3a3">Floor</span>
  <div class="track" style="left:172px;top:41.2px;width:12px"></div>
  <div class="knob" style="left:168.5px;top:38.4px"></div>
  <div class="abs" style="left:0;top:56.5px;width:192.6px;height:1px;background:#f1f1f1"></div>

  <!-- Parts Color -->
  <svg class="abs" style="left:12px;top:66.6px" width="6" height="8" viewBox="0 0 6 8"><path d="M1.6 1.6L3.8 3.8L1.6 6" fill="none" stroke="#555" stroke-width=".8"/></svg>
  <svg class="abs" style="left:17.6px;top:65px" width="12" height="11" viewBox="0 0 12 11"><path d="M4.4 1.2L8.6 5.2L4.8 8.8L.8 5Z" fill="#2d93b6"/><path d="M1.6 5.2H8.2L4.8 8.4Z" fill="#6fc0d8"/><path d="M3 .8L5.6 3.4" stroke="#1f86b3" stroke-width=".8"/><path d="M9.6 6.6Q10.8 8.2 10.8 8.9Q10.8 9.8 9.7 9.8Q8.6 9.8 8.6 8.9Q8.6 8.2 9.6 6.6Z" fill="#1f86b3"/></svg>
  <span class="t b" style="left:33.6px;top:63.8px;font-size:9.3px;color:#333">Parts Color</span>
  <div class="track" style="left:168px;top:67.7px;width:12px"></div>
  <div class="knob on" style="left:173.5px;top:64.6px"></div>

  <!-- Cutting Plane 1 -->
  <div class="abs" style="left:0;top:83.2px;width:192.6px;height:26.6px;background:#e1eff7"></div>
  <svg class="abs" style="left:11px;top:93.6px" width="8" height="6" viewBox="0 0 8 6"><path d="M1.6 1.6L3.8 3.8L6 1.6" fill="none" stroke="#555" stroke-width=".8"/></svg>
  <svg class="abs" style="left:18.4px;top:89.6px" width="11" height="13" viewBox="0 0 11 13"><path d="M1 2.6C1 1.4 5.2 1.4 5.2 2.6V10.2C5.2 11.5 1 11.5 1 10.2Z" fill="#5ab3cb"/><ellipse cx="3.1" cy="2.6" rx="2.1" ry=".9" fill="#9bd3e3"/><path d="M5.2 1.2L9.2 2.2V11.4L5.2 12.2Z" fill="#f2f9fc" stroke="#b7dcea" stroke-width=".5" stroke-dasharray="1 .7"/><path d="M5.2 .8V12.4" stroke="#2b93b3" stroke-width=".7"/></svg>
  <span class="t b" style="left:33.6px;top:90.3px;font-size:9.41px;color:#333">Cutting Plane 1</span>
  <svg class="abs" style="left:152.4px;top:92.4px" width="8" height="10" viewBox="0 0 8 10"><path d="M.8 2.2H7.2M2.8 2.2V1H5.2V2.2" fill="none" stroke="#9a9a9a" stroke-width=".8"/><path d="M1.4 2.8H6.6V9H1.4Z" fill="#b9c1c6" stroke="#9a9a9a" stroke-width=".6"/><path d="M3 4.2V7.6M5 4.2V7.6" stroke="#e1eff7" stroke-width=".6"/></svg>
  <div class="track" style="left:168px;top:94.2px;width:12px;background:#fff"></div>
  <div class="knob on" style="left:173.5px;top:91.1px"></div>

  <!-- Position / Orientation -->
  <svg class="abs" style="left:7.4px;top:126px" width="6" height="8" viewBox="0 0 6 8"><path d="M1.6 1.6L3.8 3.8L1.6 6" fill="none" stroke="#555" stroke-width=".8"/></svg>
  <span class="t b" style="left:17.9px;top:123.7px;font-size:8.98px;letter-spacing:-0.204px;color:#3a3a3a">Position</span>
  <div class="abs" style="left:133px;top:128.3px;width:27px;height:2.6px;background:#cdcdcd;border-radius:1.3px"></div>
  <div class="abs" style="left:95px;top:127.9px;width:29px;height:3.4px;background:#0b6f9f;border-radius:1.7px"></div>
  <div class="knob" style="left:123.2px;top:124.6px"></div>
  <div class="sbtn" style="left:165.8px;top:120.7px"></div>
  <svg class="abs" style="left:169.9px;top:124.5px" width="10" height="10" viewBox="0 0 10 10"><circle cx="5" cy="5" r="3.5" fill="none" stroke="#777" stroke-width=".7"/><circle cx="5" cy="5" r="1.1" fill="none" stroke="#777" stroke-width=".7"/></svg>

  <svg class="abs" style="left:7.4px;top:157px" width="6" height="8" viewBox="0 0 6 8"><path d="M1.6 1.6L3.8 3.8L1.6 6" fill="none" stroke="#555" stroke-width=".8"/></svg>
  <span class="t b" style="left:17.9px;top:154.7px;font-size:8.98px;color:#3a3a3a">Orientation</span>
  <div class="abs" style="left:106.2px;top:151.6px;width:53.8px;height:17.6px;border:1px solid #ececec;border-radius:2px;background:#fff"></div>
  <div class="abs" style="left:123.8px;top:151.6px;width:18px;height:17.6px;background:#e1eff7"></div>
  <span class="t c" style="left:106.2px;top:154.4px;width:17.8px;text-align:center;font-size:9px;color:#4a4a4a">X</span>
  <span class="t c" style="left:123.8px;top:154.4px;width:18px;text-align:center;font-size:9px;color:#4a4a4a">Y</span>
  <span class="t c" style="left:141.8px;top:154.4px;width:18px;text-align:center;font-size:9px;color:#4a4a4a">Z</span>
  <div class="sbtn" style="left:165.8px;top:151.6px"></div>
  <svg class="abs" style="left:170px;top:155.4px" width="10" height="10" viewBox="0 0 10 10"><path d="M1.6 3.4H8.2M8.2 3.4L6.6 1.8M8.4 6.6H1.8M1.8 6.6L3.4 8.2" fill="none" stroke="#333" stroke-width=".9"/></svg>

  <!-- Coloring etc -->
  <span class="t" style="left:8.3px;top:182.1px;font-size:9.35px;color:#5a5a5a">Coloring</span>
  <span class="t" style="left:97.2px;top:179.3px;font-size:9.09px;color:#4f4f4f">Solid Color</span>
  <svg class="abs" style="left:148.8px;top:184.6px" width="8" height="6" viewBox="0 0 8 6"><path d="M1.2 1.2L3.8 3.8L6.4 1.2" fill="none" stroke="#777" stroke-width=".7"/></svg>
  <div class="abs" style="left:95px;top:196.6px;width:62.4px;height:1px;background:#e6e6e6"></div>
  <svg class="abs" style="left:165.8px;top:178.7px" width="18.2" height="17.6" viewBox="0 0 18.2 17.6"><defs><pattern id="dots" width="2.6" height="2.6" patternUnits="userSpaceOnUse"><circle cx="1.3" cy="1.3" r=".45" fill="#fff"/></pattern></defs><rect width="18.2" height="17.6" rx="2" fill="#8ccfe1"/><rect width="18.2" height="17.6" rx="2" fill="url(#dots)"/></svg>

  <span class="t" style="left:8.3px;top:206px;font-size:9.35px;color:#5a5a5a">Opacity</span>
  <div class="abs" style="left:95px;top:209.7px;width:45px;height:3.4px;background:#0b6f9f;border-radius:1.7px"></div>
  <div class="knob" style="left:138.3px;top:206.4px"></div>
  <span class="t" style="left:154.2px;top:205.7px;font-size:9.25px;color:#4f4f4f">1</span>
  <div class="abs" style="left:151.4px;top:221px;width:32.6px;height:1px;background:#e6e6e6"></div>

  <span class="t" style="left:8.3px;top:230.1px;font-size:9.35px;letter-spacing:-0.118px;color:#5a5a5a">Clip model</span>
  <div class="track" style="left:172px;top:233.1px;width:12.4px"></div>
  <div class="knob" style="left:168.4px;top:230.3px"></div>

  <span class="t" style="left:8.3px;top:254.2px;font-size:9.35px;letter-spacing:-0.366px;color:#5a5a5a">Show mesh</span>
  <div class="track on" style="left:168px;top:257px;width:12px"></div>
  <div class="knob on" style="left:173.5px;top:253.9px"></div>

  <span class="t" style="left:8.3px;top:278.2px;font-size:9.35px;letter-spacing:-0.258px;color:#5a5a5a">Show plane</span>
  <div class="track" style="left:172px;top:281.1px;width:12.4px"></div>
  <div class="knob" style="left:168.2px;top:278.3px"></div>
</div>
<div class="abs" style="left:208.6px;top:156.7px;width:196.4px;height:58.6px;border:2px solid #4281e4"></div>

<!-- ============ RIGHT PANELS ============ -->
<div class="panel" style="left:862.4px;top:44.6px;width:156.4px;height:103.4px">
  <svg class="abs" style="left:8.4px;top:8.6px" width="9" height="7" viewBox="0 0 9 7"><path d="M1.4 1.6L4.4 4.6L7.4 1.6" fill="none" stroke="#666" stroke-width=".8"/></svg>
  <span class="t b" style="left:21.4px;top:5.6px;font-size:8.87px;color:#444">GEOMETRY</span>
  <svg class="abs" style="left:10px;top:22px" width="8" height="72" viewBox="0 0 8 72"><path d="M1.9 0V67.4H5M1.9 11.4H5M1.9 29.8H5M1.9 48.6H5" fill="none" stroke="#e2e2e2" stroke-width=".7"/></svg>
  <svg class="abs" style="left:25px;top:28.6px" width="7" height="10" viewBox="0 0 7 10"><path d="M.8 1L3 1.6L6.2 3.4V9L3.2 7.4L.8 7Z" fill="#b4b4b4"/></svg>
  <span class="t" style="left:37.6px;top:27.4px;font-size:9.3px;color:#9a9a9a">fluid volume</span>
  <svg class="abs" style="left:137px;top:29.4px" width="11" height="8" viewBox="0 0 11 8"><path d="M.8 4Q5.5 -1 10.2 4Q5.5 9 .8 4Z" fill="none" stroke="#c4c4c4" stroke-width=".8"/><circle cx="5.5" cy="4" r="1.7" fill="none" stroke="#c4c4c4" stroke-width=".8"/></svg>
  <svg class="abs" style="left:25px;top:47px" width="7" height="10" viewBox="0 0 7 10"><path d="M.8 1L3 1.6L6.2 3.4V9L3.2 7.4L.8 7Z" fill="#b4b4b4"/></svg>
  <span class="t" style="left:37.6px;top:45.8px;font-size:9.3px;letter-spacing:-0.115px;color:#9a9a9a">solid 1 input - noSlipBo...</span>
  <svg class="abs" style="left:137px;top:47.8px" width="11" height="8" viewBox="0 0 11 8"><path d="M.8 4Q5.5 -1 10.2 4Q5.5 9 .8 4Z" fill="none" stroke="#c4c4c4" stroke-width=".8"/><circle cx="5.5" cy="4" r="1.7" fill="none" stroke="#c4c4c4" stroke-width=".8"/></svg>
  <svg class="abs" style="left:25px;top:65.8px" width="7" height="10" viewBox="0 0 7 10"><path d="M.8 1L3 1.6L6.2 3.4V9L3.2 7.4L.8 7Z" fill="#555"/></svg>
  <span class="t" style="left:37.6px;top:64.6px;font-size:9.3px;letter-spacing:-0.075px;color:#4a4a4a">solid 2 input - group-all...</span>
  <svg class="abs" style="left:25px;top:84.6px" width="7" height="10" viewBox="0 0 7 10"><path d="M.8 1L3 1.6L6.2 3.4V9L3.2 7.4L.8 7Z" fill="#555"/></svg>
  <span class="t" style="left:37.6px;top:83.2px;font-size:9.3px;letter-spacing:-0.237px;color:#4a4a4a">v-cond 1 - Tree 1</span>
</div>
<div class="panel" style="left:862.4px;top:152.2px;width:156.4px;height:58.4px">
  <svg class="abs" style="left:8.4px;top:9.2px" width="9" height="7" viewBox="0 0 9 7"><path d="M1.4 1.6L4.4 4.6L7.4 1.6" fill="none" stroke="#666" stroke-width=".8"/></svg>
  <span class="t b" style="left:22px;top:6.2px;font-size:8.87px;letter-spacing:-0.280px;color:#444">TIME STEPS</span>
  <svg class="abs" style="left:10px;top:29px" width="90" height="12" viewBox="0 0 90 12"><g fill="none" stroke="#cfcfcf" stroke-width=".8" stroke-linejoin="round"><path d="M4 2.8V9.2M10.4 6H5M7.4 3.4L4.8 6L7.4 8.6"/><path d="M28.6 6H21.4M24.4 3L21.4 6L24.4 9"/><path d="M40.6 2.4L46.6 6L40.6 9.6Z"/><path d="M57.8 6H65M62 3L65 6L62 9"/><path d="M75.6 6H81M78.6 3.4L81.2 6L78.6 8.6M82 2.8V9.2"/></g></svg>
  <span class="t" style="left:107px;top:28.4px;font-size:9.25px;letter-spacing:-0.169px;color:#a9a9a9">3.403e+</span>
  <div class="abs" style="left:104.2px;top:44.8px;width:35px;height:1px;background:#e9e9e9"></div>
  <span class="t" style="left:144.4px;top:28.4px;font-size:9.25px;color:#444">s</span>
</div>

<!-- panel resize grips -->
<div class="abs" style="left:209.2px;top:88px;width:2.6px;height:10.4px;border-left:.8px solid #dcdcdc;border-right:.8px solid #dcdcdc"></div>
<div class="abs" style="left:857.4px;top:120.6px;width:2.6px;height:10.4px;border-left:.8px solid #d2d2d2;border-right:.8px solid #d2d2d2"></div>

<!-- chat button -->
<div class="abs" style="left:997.8px;top:354.8px;width:27px;height:26.6px;background:#0b76a8;border-radius:2.5px 0 0 2.5px"></div>
<svg class="abs" style="left:1004.6px;top:362.6px" width="12" height="11" viewBox="0 0 12 11"><path d="M6.2 1.2C9 1.2 10.8 2.8 10.8 4.8C10.8 6.8 9 8.4 6.2 8.4C5.5 8.4 4.9 8.3 4.3 8.1L1.8 9.4L2.7 7.2C1.9 6.5 1.6 5.7 1.6 4.8C1.6 2.8 3.4 1.2 6.2 1.2Z" fill="#fff"/></svg>

<!-- numbered callouts -->
<div class="badge" style="left:47.8px;top:31.8px">1</div>
<div class="badge" style="left:197.1px;top:175.5px">2</div>
<div class="badge" style="left:400px;top:220.1px">3</div>
<div class="badge" style="left:353.3px;top:291.7px">4</div>

</div>
</body>
</html>
